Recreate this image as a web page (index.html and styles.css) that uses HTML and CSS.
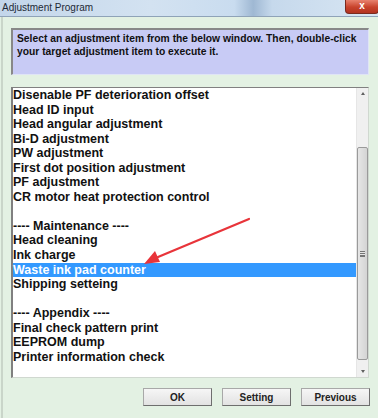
FILE: index.html
```html
<!DOCTYPE html>
<html lang="en">
<head>
	<meta charset="UTF-8">
	<title>Adjustment Program</title>
	<link rel="stylesheet" href="styles.css">
</head>
<body>
	<div class="window">
		<div class="titlebar">
			<span class="title">Adjustment Program</span>
			<span class="close">x</span>
		</div>
		<div class="client">
			<div class="note">Select an adjustment item from the below window. Then, double-click your target adjustment item to execute it.</div>
			<div class="listbox">
				<ul class="items">
					<li>Disenable PF deterioration offset</li>
					<li>Head ID input</li>
					<li>Head angular adjustment</li>
					<li>Bi-D adjustment</li>
					<li>PW adjustment</li>
					<li>First dot position adjustment</li>
					<li>PF adjustment</li>
					<li>CR motor heat protection control</li>
					<li>&nbsp;</li>
					<li>---- Maintenance ----</li>
					<li>Head cleaning</li>
					<li>Ink charge</li>
					<li class="selected">Waste ink pad counter</li>
					<li>Shipping setteing</li>
					<li>&nbsp;</li>
					<li>---- Appendix ----</li>
					<li>Final check pattern print</li>
					<li>EEPROM dump</li>
					<li>Printer information check</li>
				</ul>
				<div class="scrollbar">
					<span class="arrow up"></span>
					<div class="track">
						<div class="thumb"><span class="grip"></span></div>
					</div>
					<span class="arrow down"></span>
				</div>
			</div>
			<div class="buttons">
				<button class="btn">OK</button>
				<button class="btn">Setting</button>
				<button class="btn">Previous</button>
			</div>
		</div>
	</div>

	<!-- red pointer arrow drawn over the list -->
	<svg class="pointer" width="378" height="418" viewBox="0 0 378 418">
		<line x1="249" y1="219" x2="158" y2="257" stroke="#e8343a" stroke-width="2.2" stroke-linecap="round"/>
		<polygon points="144,264 155,251 160,262" fill="#e8343a"/>
	</svg>
</body>
</html>
```

FILE: styles.css
```css
*{
	margin: 0;
	padding: 0;
	box-sizing: border-box;
}
body {
	width: 378px;
	height: 418px;
	overflow: hidden;
	position: relative;
	background: #e3f1e3;
	font-family: "Liberation Sans", Arial, sans-serif;
}
ul li{
	list-style: none;
}
.window {
	height: 418px;
	display: flex;
	flex-direction: column;
}
.titlebar {
	height: 17px;
	display: flex;
	align-items: flex-start;
	justify-content: space-between;
	background: linear-gradient(90deg, #c3d6ea 0%, #d3e2f1 40%, #c9dcef 62%, #9fb8d3 67%, #c6d9ec 72%, #d8e6f3 100%);
	border-bottom: 1px solid #8fa3b8;
}
.title {
	font-size: 10px;
	color: #1e2a36;
	padding: 2px 0 0 2px;
}
.close {
	width: 34px;
	height: 14px;
	margin-right: -1px;
	background: linear-gradient(#e8826e, #c8432c 55%, #b23320);
	border: 1px solid #7a2a1e;
	border-top: 0;
	border-radius: 0 0 4px 4px;
	color: #fff;
	font-size: 10px;
	font-weight: bold;
	text-align: center;
	line-height: 12px;
}
.client {
	flex: 1;
	display: flex;
	flex-direction: column;
	padding: 11px 9px 0 8px;
	border-left: 2px solid #c9d5c9;
	margin-left: 1px;
}
.note {
	height: 47px;
	background: #c8cbf5;
	border-top: 2px solid #888;
	border-left: 2px solid #888;
	border-right: 1px solid #dfe4f5;
	border-bottom: 1px solid #dfe4f5;
	padding: 2px 6px 0 4px;
	font-size: 10.3px;
	font-weight: bold;
	line-height: 13px;
	color: #111;
}
.listbox {
	margin-top: 12px;
	height: 291px;
	display: flex;
	background: #fff;
	border-top: 1px solid #808080;
	border-left: 2px solid #808080;
	border-right: 1px solid #d0d8d0;
	border-bottom: 1px solid #d0d8d0;
}
.items {
	flex: 1;
	font-size: 12.5px;
	font-weight: bold;
	line-height: 14.55px;
	color: #111;
}
.items li {
	padding-left: 0;
	white-space: nowrap;
}
.items li.selected {
	background: #3399ff;
	color: #fff;
}
.scrollbar {
	width: 12px;
	display: flex;
	flex-direction: column;
	background: #f0f0f0;
	border-left: 1px solid #e6e6e6;
}
.arrow {
	height: 11px;
	position: relative;
}
.arrow::after {
	content: "";
	position: absolute;
	left: 4px;
	top: 4px;
	border-left: 2px solid transparent;
	border-right: 2px solid transparent;
}
.arrow.up::after {
	border-bottom: 3px solid #606060;
}
.arrow.down::after {
	border-top: 3px solid #606060;
}
.track {
	flex: 1;
	padding-top: 48px;
	padding-bottom: 6px;
}
.thumb {
	height: 213px;
	background: linear-gradient(90deg, #e6e6e6, #d4d4d4);
	border: 1px solid #9a9a9a;
	border-radius: 2px;
	display: flex;
	align-items: center;
	justify-content: center;
}
.grip {
	width: 5px;
	height: 6px;
	border-top: 1px solid #777;
	border-bottom: 1px solid #777;
	background: linear-gradient(#e6e6e6 0 1px, #777 1px 2px, #e6e6e6 2px);
	background-size: 5px 2px;
}
.buttons {
	margin-top: 10px;
	margin-right: -1px;
	display: flex;
	justify-content: flex-end;
	gap: 10px;
}
.btn {
	width: 69px;
	height: 18px;
	font-family: "Liberation Sans", Arial, sans-serif;
	font-size: 10px;
	font-weight: bold;
	color: #222;
	background: linear-gradient(#f6f6f6, #e2e2e2);
	border: 1px solid #a8a8a8;
	border-right-color: #6e6e6e;
	border-bottom-color: #6e6e6e;
}
.pointer {
	position: absolute;
	left: 0;
	top: 0;
	pointer-events: none;
}
```
